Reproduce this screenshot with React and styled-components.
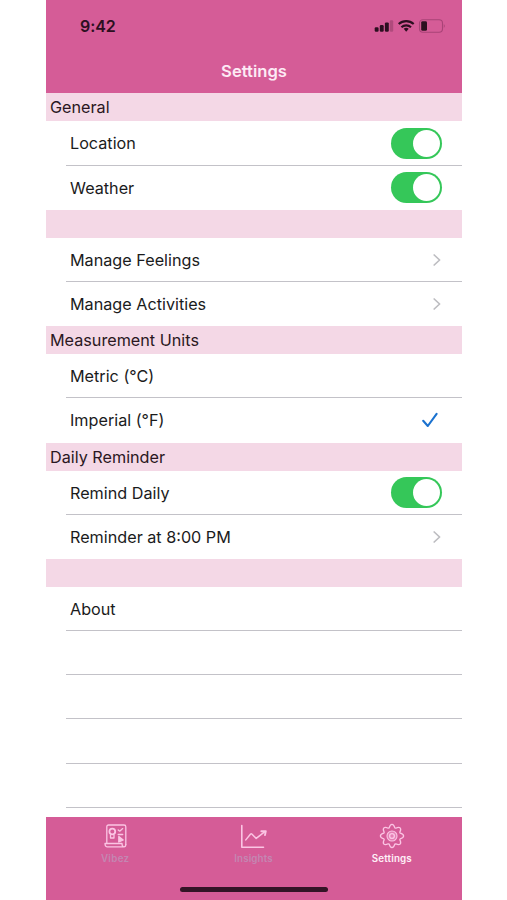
import React, { useState } from "react";
import styled, { createGlobalStyle } from "styled-components";

const GlobalStyle = createGlobalStyle`
  * {
    box-sizing: border-box;
  }

  body {
    margin: 0;
    background: #fff;
    font-family: Inter, "Liberation Sans", sans-serif;
  }
`;

const Screen = styled.div`
  display: flex;
  flex-direction: column;
  width: 416px;
  height: 900px;
  margin: 0 auto 0 46px;
  overflow: hidden;
  background: #fff;
`;

const Header = styled.header`
  flex: none;
  height: 93.4px;
  background: #d55c97;
`;

const StatusBar = styled.div`
  display: flex;
  align-items: center;
  justify-content: space-between;
  height: 52px;
  padding: 0 16.5px 0 34px;
`;

const Time = styled.span`
  font-size: 16px;
  font-weight: 600;
  letter-spacing: -0.1px;
  color: #2c0f20;
`;

const StatusIcons = styled.svg`
  display: block;
  width: 72px;
  height: 16px;
`;

const Title = styled.h1`
  margin: 0;
  padding-top: 9px;
  font-size: 16.6px;
  font-weight: 600;
  line-height: 20px;
  text-align: center;
  color: #fdeaf5;
`;

const List = styled.main`
  flex: 1;
  min-height: 0;
  overflow: hidden;
`;

const SectionHeader = styled.h2`
  height: 28px;
  margin: 0;
  padding-left: 4px;
  font-size: 16.2px;
  font-weight: 400;
  line-height: 28px;
  background: #f4d8e6;
  color: #2a1722;
`;

const Row = styled.div`
  display: flex;
  align-items: center;
  justify-content: space-between;
  height: 44.2px;
  margin-left: 20px;
  padding: ${(props) => (props.$last ? 0 : "1px")} 20px 0 4px;
  border-bottom: ${(props) => (props.$last ? "none" : "1px solid #c3c2c8")};
`;

const Label = styled.span`
  font-size: 16.2px;
  line-height: 20px;
  color: #1b1b1c;
`;

const Track = styled.button`
  display: flex;
  align-items: center;
  justify-content: ${(props) => (props.$on ? "flex-end" : "flex-start")};
  width: 51.5px;
  height: 31px;
  padding: 2px;
  border: none;
  border-radius: 16px;
  background: ${(props) => (props.$on ? "#35c759" : "#e9e9ea")};
`;

const Knob = styled.span`
  width: 27px;
  height: 27px;
  border-radius: 50%;
  background: #fff;
`;

const Accessory = styled.svg`
  display: block;
  margin-right: ${(props) => props.$right || 0}px;
  fill: none;
  stroke-linecap: round;
  stroke-linejoin: round;
`;

const TabBar = styled.nav`
  display: grid;
  grid-template-columns: repeat(3, 1fr);
  flex: none;
  height: 55px;
  padding: 6px 1px 0 0;
  background: #d55c97;
`;

const Tab = styled.div`
  display: flex;
  flex-direction: column;
  align-items: center;
  color: ${(props) => (props.$active ? "#fff0f8" : "#c486b2")};
  font-size: 9.8px;
  font-weight: 600;
  line-height: 12px;
  letter-spacing: ${(props) => props.$spacing}px;

  svg {
    display: block;
    margin-bottom: 4px;
    fill: none;
    stroke: #fbc5e4;
    stroke-linecap: round;
    stroke-linejoin: round;
  }
`;

const HomeArea = styled.footer`
  display: flex;
  justify-content: center;
  flex: none;
  height: 28.4px;
  padding-top: 15.5px;
  background: #d55c97;
`;

const HomeIndicator = styled.div`
  width: 148px;
  height: 5px;
  border-radius: 3px;
  background: #331426;
`;

function Switch({ label }) {
  const [on, setOn] = useState(true);

  return (
    <Track
      type="button"
      role="switch"
      aria-label={label}
      aria-checked={on}
      $on={on}
      onClick={() => setOn(!on)}
    >
      <Knob />
    </Track>
  );
}

function Chevron() {
  return (
    <Accessory $right={1} width="8" height="14" stroke="#bdbdc1" strokeWidth="1.7">
      <path d="M1.2 2 L6.6 7 L1.2 12" />
    </Accessory>
  );
}

function Check() {
  return (
    <Accessory $right={4} width="16" height="16" stroke="#1b72cf" strokeWidth="2.1">
      <path d="M1.2 8.8 L5.8 14 L14.6 1.8" />
    </Accessory>
  );
}

// Signal, wifi and battery
function Status() {
  return (
    <StatusIcons viewBox="0 0 72 16">
      <g fill="#2c0f20">
        <rect x="0.7" y="9.2" width="3.9" height="4.6" rx="1.2" />
        <rect x="5.8" y="7" width="3.9" height="6.8" rx="1.2" />
        <rect x="10.9" y="4.4" width="3.9" height="9.4" rx="1.2" />
        <rect x="15.8" y="2.2" width="3.4" height="11.6" rx="1.2" opacity="0.22" />
        <path d="M29.7 10.8 a4.2 4.2 0 0 1 5 0 L32.2 13.7z" />
        <rect x="47.2" y="3.2" width="5.8" height="9.6" rx="1.4" />
      </g>
      <g fill="none" stroke="#2c0f20" strokeWidth="2.1">
        <path d="M24.7 6 a11.2 11.2 0 0 1 15 0" />
        <path d="M27.4 9.2 a7.1 7.1 0 0 1 9.6 0" />
      </g>
      <rect
        x="45.5"
        y="1.8"
        width="23"
        height="12.4"
        rx="3.4"
        fill="none"
        stroke="#a84377"
        strokeWidth="1.1"
      />
      <path d="M69.8 6 q1.9 2 0 4z" fill="#a84377" />
    </StatusIcons>
  );
}

function VibezIcon() {
  return (
    <svg width="24" height="26" viewBox="0 0 24 26" strokeWidth="1.3">
      <path d="M3.8 20.2 V3.8 Q3.8 2 5.6 2 H21 Q22.8 2 22.8 3.8 V21.5" />
      <path d="M2 20.5 H19 Q19 23.8 21 23.8 H4 Q2 23.8 2 20.5z M21 23.8 Q22.8 23.8 22.8 21.5" />
      <circle cx="9.3" cy="8.5" r="2.9" strokeWidth="1.8" />
      <path d="M7.5 12 V15 H11 V12" />
      <path d="M15.2 7 L16.7 8.2 L19.7 5.6 M15.2 11.5 H19.7" />
      <path d="M15.8 13.4 V19 L20.2 17z" fill="#fbc5e4" />
    </svg>
  );
}

function InsightsIcon() {
  return (
    <svg width="28" height="26" viewBox="0 0 28 26" strokeWidth="1.6">
      <path d="M2.8 2.5 V24.2 H24.5" />
      <path d="M6.8 16.9 L11.6 11 Q12.2 10.5 12.8 11 L17.2 15.4 L25.9 8.7" strokeWidth="1.5" />
      <path d="M22.3 8.3 L26.8 8.1 L26 12.1" strokeWidth="1.9" />
    </svg>
  );
}

function SettingsIcon() {
  return (
    <svg width="26" height="26" viewBox="0 0 26 26" strokeWidth="1.3">
      <path d="M10.2 4.8 C10.8 2.6 11.3 1.4 13 1.4 C14.7 1.4 15.2 2.6 15.8 4.8 L16.8 5.2 C18.8 4.1 19.9 3.7 21.1 4.9 C22.3 6.1 21.9 7.2 20.8 9.2 L21.2 10.2 C23.4 10.8 24.6 11.3 24.6 13 C24.6 14.7 23.4 15.2 21.2 15.8 L20.8 16.8 C21.9 18.8 22.3 19.9 21.1 21.1 C19.9 22.3 18.8 21.9 16.8 20.8 L15.8 21.2 C15.2 23.4 14.7 24.6 13 24.6 C11.3 24.6 10.8 23.4 10.2 21.2 L9.2 20.8 C7.2 21.9 6.1 22.3 4.9 21.1 C3.7 19.9 4.1 18.8 5.2 16.8 L4.8 15.8 C2.6 15.2 1.4 14.7 1.4 13 C1.4 11.3 2.6 10.8 4.8 10.2 L5.2 9.2 C4.1 7.2 3.7 6.1 4.9 4.9 C6.1 3.7 7.2 4.1 9.2 5.2z" />
      <circle cx="13" cy="13" r="5" fill="#e580b5" strokeWidth="1.1" />
      <circle cx="13" cy="13" r="2.4" strokeWidth="1.4" />
    </svg>
  );
}

function App() {
  return (
    <>
      <GlobalStyle />
      <Screen>
        <Header>
          <StatusBar>
            <Time>9:42</Time>
            <Status />
          </StatusBar>
          <Title>Settings</Title>
        </Header>

        <List>
          <SectionHeader>General</SectionHeader>
          <Row>
            <Label>Location</Label>
            <Switch label="Location" />
          </Row>
          <Row $last>
            <Label>Weather</Label>
            <Switch label="Weather" />
          </Row>

          <SectionHeader />
          <Row>
            <Label>Manage Feelings</Label>
            <Chevron />
          </Row>
          <Row $last>
            <Label>Manage Activities</Label>
            <Chevron />
          </Row>

          <SectionHeader>Measurement Units</SectionHeader>
          <Row>
            <Label>Metric (°C)</Label>
          </Row>
          <Row $last>
            <Label>Imperial (°F)</Label>
            <Check />
          </Row>

          <SectionHeader>Daily Reminder</SectionHeader>
          <Row>
            <Label>Remind Daily</Label>
            <Switch label="Remind Daily" />
          </Row>
          <Row $last>
            <Label>Reminder at 8:00 PM</Label>
            <Chevron />
          </Row>

          <SectionHeader />
          <Row>
            <Label>About</Label>
          </Row>
          <Row />
          <Row />
          <Row />
          <Row />
        </List>

        <TabBar>
          <Tab $spacing={0.3}>
            <VibezIcon />
            Vibez
          </Tab>
          <Tab $spacing={0.1}>
            <InsightsIcon />
            Insights
          </Tab>
          <Tab $active $spacing={0.15}>
            <SettingsIcon />
            Settings
          </Tab>
        </TabBar>
        <HomeArea>
          <HomeIndicator />
        </HomeArea>
      </Screen>
    </>
  );
}

export default App;
